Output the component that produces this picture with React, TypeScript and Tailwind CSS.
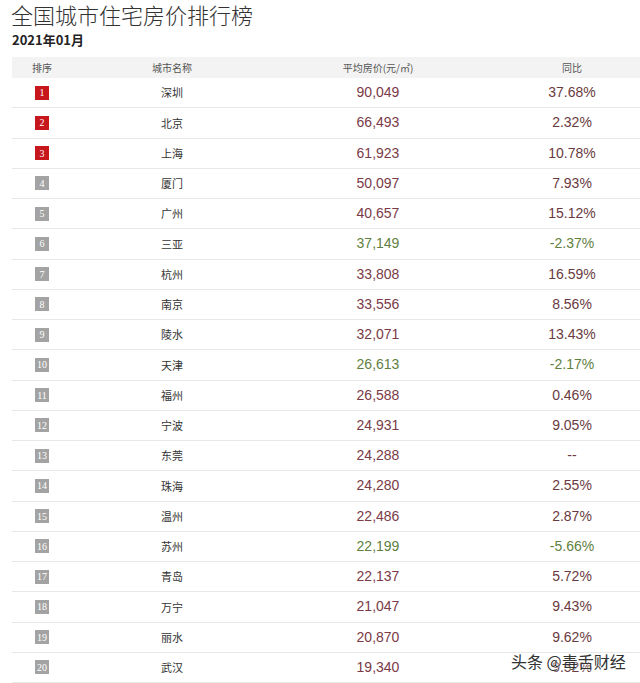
import React from "react";

type Row = { city: string; price: string; pct: string; down?: boolean };

const rows: Row[] = [
  { city: "深圳", price: "90,049", pct: "37.68%" },
  { city: "北京", price: "66,493", pct: "2.32%" },
  { city: "上海", price: "61,923", pct: "10.78%" },
  { city: "厦门", price: "50,097", pct: "7.93%" },
  { city: "广州", price: "40,657", pct: "15.12%" },
  { city: "三亚", price: "37,149", pct: "-2.37%", down: true },
  { city: "杭州", price: "33,808", pct: "16.59%" },
  { city: "南京", price: "33,556", pct: "8.56%" },
  { city: "陵水", price: "32,071", pct: "13.43%" },
  { city: "天津", price: "26,613", pct: "-2.17%", down: true },
  { city: "福州", price: "26,588", pct: "0.46%" },
  { city: "宁波", price: "24,931", pct: "9.05%" },
  { city: "东莞", price: "24,288", pct: "--" },
  { city: "珠海", price: "24,280", pct: "2.55%" },
  { city: "温州", price: "22,486", pct: "2.87%" },
  { city: "苏州", price: "22,199", pct: "-5.66%", down: true },
  { city: "青岛", price: "22,137", pct: "5.72%" },
  { city: "万宁", price: "21,047", pct: "9.43%" },
  { city: "丽水", price: "20,870", pct: "9.62%" },
  { city: "武汉", price: "19,340", pct: "9.52%" },
];

const cjk = "font-['Noto_Sans_CJK_SC',sans-serif]";

export default function App() {
  return (
    <div className={`relative w-[640px] h-[683px] overflow-hidden bg-white ${cjk}`}>
      <div className="pl-[11px] h-[29px] leading-[29px] text-[22px] text-[#333] font-light">
        全国城市住宅房价排行榜
      </div>
      <div className="pl-[12px] mt-[2px] h-[18px] leading-[18px] text-[13px] font-bold text-[#222] mb-[8px]">
        2021年01月
      </div>
      <div className="ml-[12px] w-[648px]">
        <div className="flex h-[21px] items-center bg-[#f3f3f3] text-[10px] text-[#555]">
          <div className="w-[60px] text-center">排序</div>
          <div className="w-[200px] text-center">城市名称</div>
          <div className="w-[212px] text-center">平均房价(元/㎡)</div>
          <div className="w-[176px] text-center">同比</div>
        </div>
        {rows.map((r, i) => (
          <div
            key={i}
            className="flex h-[30.25px] items-center border-b border-[#e8e8e8]"
          >
            <div className="w-[60px] flex justify-center">
              <div
                className={`w-[14px] h-[14px] flex items-center justify-center text-white text-[10px] font-['Liberation_Serif',serif] ${
                  i < 3 ? "bg-[#c8161d]" : "bg-[#a3a3a3]"
                }`}
              >
                {i + 1}
              </div>
            </div>
            <div className="w-[200px] text-center text-[11px] text-[#333]">{r.city}</div>
            <div
              className={`w-[212px] text-center text-[14px] font-['Liberation_Sans',sans-serif] ${
                r.down ? "text-[#5f8040]" : "text-[#7a3a46]"
              }`}
            >
              {r.price}
            </div>
            <div
              className={`w-[176px] text-center text-[14px] font-['Liberation_Sans',sans-serif] ${
                r.down ? "text-[#5f8040]" : "text-[#6a3a40]"
              }`}
            >
              {r.pct}
            </div>
          </div>
        ))}
      </div>
      <div className="absolute left-[511px] top-[649px] text-[16px] leading-[24px] text-[#333] [text-shadow:0_0_2px_#fff,0_0_2px_#fff]">
        头条 @毒舌财经
      </div>
    </div>
  );
}
